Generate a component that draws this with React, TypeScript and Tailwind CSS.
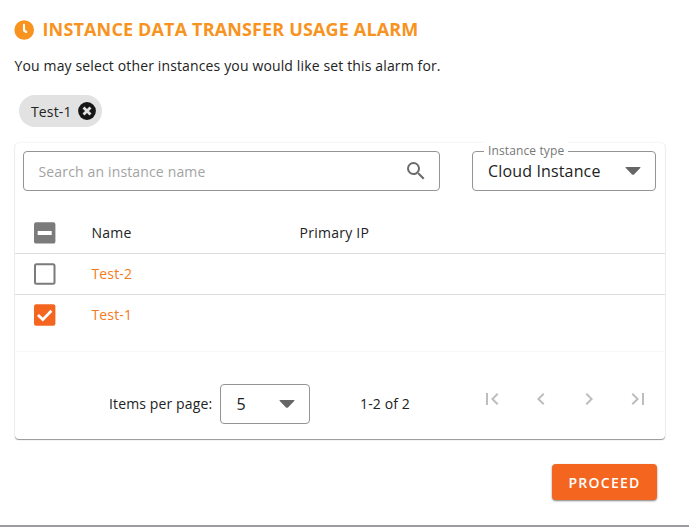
import {
  MdChevronLeft,
  MdChevronRight,
  MdFirstPage,
  MdLastPage,
  MdSearch,
} from 'react-icons/md';

type CheckState = 'on' | 'off' | 'mixed';

const instances: { name: string; ip: string; state: CheckState }[] = [
  { name: 'Test-2', ip: '', state: 'off' },
  { name: 'Test-1', ip: '', state: 'on' },
];

function ClockIcon() {
  return (
    <svg width="20" height="20" viewBox="0 0 20 20" fill="none">
      <circle cx="10.2" cy="10" r="9.8" fill="currentColor" />
      <path d="M10 4.9v5.6l2.3 1.5" stroke="#fff" strokeWidth="2.1" strokeLinecap="round" strokeLinejoin="round" />
    </svg>
  );
}

function CloseIcon() {
  return (
    <svg width="18" height="18" viewBox="0 0 18 18" fill="none">
      <circle cx="9" cy="9" r="8.9" fill="#161616" />
      <path d="M6.5 6.5l5 5M11.5 6.5l-5 5" stroke="#e2e2e2" strokeWidth="2.8" strokeLinecap="square" />
    </svg>
  );
}

function CaretIcon() {
  return (
    <svg width="16" height="8" viewBox="0 0 16 8" fill="#666">
      <path d="M1.4 0h13.2c.9 0 1.1.6.6 1.1L9 7.4c-.6.6-1.4.6-2 0L.8 1.1C.3.6.5 0 1.4 0z" />
    </svg>
  );
}

function Checkbox({ state }: { state: CheckState }) {
  return (
    <svg width="22" height="22" viewBox="0 0 22 22" fill="none">
      {state === 'off' && <rect x="1" y="1.2" width="19.5" height="19.5" rx="1.5" stroke="#7b7b7b" strokeWidth="2" />}
      {state === 'mixed' && (
        <>
          <rect y=".2" width="21.4" height="21.4" rx="2.2" fill="#7b7b7b" />
          <path d="M3.7 9h14v4h-14z" fill="#fff" />
        </>
      )}
      {state === 'on' && (
        <>
          <rect y=".2" width="21.4" height="21.6" rx="2.2" fill="#f46620" />
          <path d="M4 11l4.8 4.6 8.6-8.9" stroke="#fff" strokeWidth="2.8" />
        </>
      )}
    </svg>
  );
}

function Chip({ label }: { label: string }) {
  return (
    <div className="flex h-8 w-[83px] items-center justify-between rounded-full bg-[#e2e2e2] pl-3 pr-[6.5px] text-[14px] tracking-[0.15px] text-[#222]">
      <span className="pt-px">{label}</span>
      <CloseIcon />
    </div>
  );
}

function InstanceRow({ name, ip, state }: { name: string; ip: string; state: CheckState }) {
  return (
    <div className="flex h-[41px] items-center pb-px pl-[19px] text-[14px] tracking-[0.15px] text-[#f47b20]">
      <div className="w-[57.5px]">
        <Checkbox state={state} />
      </div>
      <a href="#" className="w-[208px] pb-0.5">{name}</a>
      <span>{ip}</span>
    </div>
  );
}

export default function App() {
  return (
    <div className="flex h-[527px] w-[689px] flex-col overflow-hidden border-b-2 border-[#9b9ba4] bg-white font-['Open_Sans',sans-serif] text-[#222]">
      <div className="ml-[14px] mt-[14px] flex h-[31px] items-center gap-[8.5px] text-[#f7931e]">
        <ClockIcon />
        <h1 className="pb-px text-[18px] font-bold leading-[30px] tracking-[0.15px]">INSTANCE DATA TRANSFER USAGE ALARM</h1>
      </div>
      <p className="ml-[14.5px] mt-[11px] text-[14px] leading-5 tracking-[0.14px]">
        You may select other instances you would like set this alarm for.
      </p>
      <div className="ml-[19px] mt-[19px]">
        <Chip label="Test-1" />
      </div>

      <div className="ml-[15px] mt-4 flex h-[296px] w-[650px] flex-col rounded shadow-[0_1px_1px_rgba(0,0,0,0.4),0_0_2px_rgba(0,0,0,0.12)]">
        <div className="flex h-[209px] flex-col border-b border-[#f7f7f7]">
          <div className="flex pl-2 pt-2">
            <div className="flex h-10 w-[417px] items-center justify-between rounded border border-[#949494] pl-[14.5px] pr-[11px]">
              <span className="text-[14px] tracking-[0.15px] text-[#a3a3a3]">Search an instance name</span>
              <MdSearch size={24} className="text-[#6b6b6b]" />
            </div>
            <div className="relative ml-8 flex h-10 w-[184px] items-center justify-between rounded border border-[#949494] pl-[15px] pr-[14.5px]">
              <span className="absolute -top-[10px] left-[11px] bg-white px-1 text-[12px] leading-[17px] tracking-[0.12px] text-[#777]">
                Instance type
              </span>
              <span className="text-[16px] tracking-[0.15px]">Cloud Instance</span>
              <CaretIcon />
            </div>
          </div>
          <div className="mt-5 flex h-[43px] items-center border-b border-[#dedede] pl-[19px] text-[14px] font-medium tracking-[0.25px]">
            <div className="w-[57.5px] pt-px">
              <Checkbox state="mixed" />
            </div>
            <span className="w-[208px]">Name</span>
            <span>Primary IP</span>
          </div>
          <div>
            {instances.map((instance) => (
              <div key={instance.name} className="h-[41px] border-b border-[#dedede] last:border-b-0">
                <InstanceRow {...instance} />
              </div>
            ))}
          </div>
        </div>

        <div className="flex items-center pl-[94px] pt-[32px] text-[14px] tracking-[0.13px]">
          <span className="w-[111px] pb-px">Items per page:</span>
          <div className="flex h-10 w-[90px] items-center justify-between rounded border border-[#949494] pl-[15.5px] pr-[14.5px]">
            <span className="text-[16px]">5</span>
            <CaretIcon />
          </div>
          <span className="ml-[50px] w-[120px] pb-px">1-2 of 2</span>
          <div className="-mt-[10px] flex gap-[24.5px] text-[#bdbdbd]">
            <MdFirstPage size={24} />
            <MdChevronLeft size={24} />
            <MdChevronRight size={24} />
            <MdLastPage size={24} />
          </div>
        </div>
      </div>

      <button className="ml-[552px] mt-[25px] h-9 w-[105px] rounded bg-[#f46620] text-[14px] font-semibold tracking-[1.25px] text-white shadow-[0_1px_2px_rgba(0,0,0,0.5)]">
        PROCEED
      </button>
    </div>
  );
}
